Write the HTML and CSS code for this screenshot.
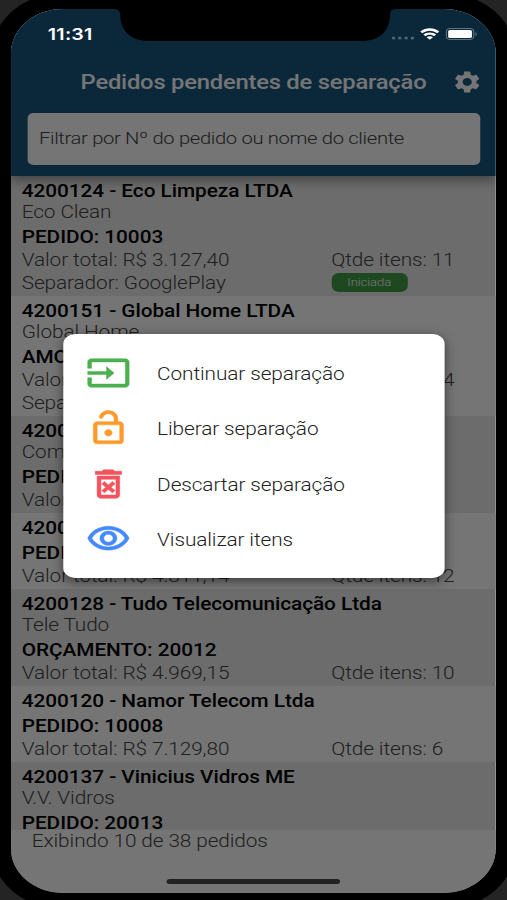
FILE: index.html
```html
<!DOCTYPE html>
<html lang="pt-BR">
<head>
    <meta charset="UTF-8">
    <meta name="viewport" content="width=device-width, initial-scale=1.0">
    <title>Pedidos pendentes de separação</title>
    <link rel="stylesheet" href="styles.css">
</head>
<body>
    <div class="screen">
        <header class="header">
            <div class="title-bar">
                <h1>Pedidos pendentes de separação</h1>
                <svg class="gear" viewBox="0 0 24 24"><path d="M19.14 12.94c.04-.3.06-.61.06-.94 0-.32-.02-.64-.07-.94l2.03-1.58c.18-.14.23-.41.12-.61l-1.92-3.32c-.12-.22-.37-.29-.59-.22l-2.39.96c-.5-.38-1.03-.7-1.62-.94l-.36-2.54c-.04-.24-.24-.41-.48-.41h-3.84c-.24 0-.43.17-.47.41l-.36 2.54c-.59.24-1.13.57-1.62.94l-2.39-.96c-.22-.08-.47 0-.59.22L2.74 8.87c-.12.21-.08.47.12.61l2.03 1.58c-.05.3-.09.63-.09.94s.02.64.07.94l-2.03 1.58c-.18.14-.23.41-.12.61l1.92 3.32c.12.22.37.29.59.22l2.39-.96c.5.38 1.03.7 1.62.94l.36 2.54c.05.24.24.41.48.41h3.84c.24 0 .44-.17.47-.41l.36-2.54c.59-.24 1.13-.56 1.62-.94l2.39.96c.22.08.47 0 .59-.22l1.92-3.32c.12-.22.07-.47-.12-.61l-2.01-1.58zM12 15.6c-1.98 0-3.6-1.62-3.6-3.6s1.62-3.6 3.6-3.6 3.6 1.62 3.6 3.6-1.62 3.6-3.6 3.6z"/></svg>
            </div>
            <div class="search">Filtrar por Nº do pedido ou nome do cliente</div>
        </header>

        <main class="list">
            <div class="order">
                <div class="client">4200124 - Eco Limpeza LTDA</div>
                <div class="name">Eco Clean</div>
                <div class="number">PEDIDO: 10003</div>
                <div class="values"><span>Valor total: R$ 3.127,40</span><span>Qtde itens: 11</span></div>
                <div class="picker"><span>Separador: GooglePlay</span><span class="badge">Iniciada</span></div>
            </div>
            <div class="order">
                <div class="client">4200151 - Global Home LTDA</div>
                <div class="name">Global Home</div>
                <div class="number">AMOSTRA: 30004</div>
                <div class="values"><span>Valor total: R$ 2.350,00</span><span>Qtde itens: 14</span></div>
                <div class="picker"><span>Separador: GooglePlay</span></div>
            </div>
            <div class="order">
                <div class="client">4200130 - Comercial Ltda</div>
                <div class="name">Comercial</div>
                <div class="number">PEDIDO: 10005</div>
                <div class="values"><span>Valor total: R$ 1.200,00</span><span>Qtde itens: 5</span></div>
            </div>
            <div class="order">
                <div class="client">4200126 - Casa Ltda</div>
                <div class="number">PEDIDO: 10006</div>
                <div class="values"><span>Valor total: R$ 4.811,14</span><span>Qtde itens: 12</span></div>
            </div>
            <div class="order">
                <div class="client">4200128 - Tudo Telecomunicação Ltda</div>
                <div class="name">Tele Tudo</div>
                <div class="number">ORÇAMENTO: 20012</div>
                <div class="values"><span>Valor total: R$ 4.969,15</span><span>Qtde itens: 10</span></div>
            </div>
            <div class="order">
                <div class="client">4200120 - Namor Telecom Ltda</div>
                <div class="number">PEDIDO: 10008</div>
                <div class="values"><span>Valor total: R$ 7.129,80</span><span>Qtde itens: 6</span></div>
            </div>
            <div class="order">
                <div class="client">4200137 - Vinicius Vidros ME</div>
                <div class="name">V.V. Vidros</div>
                <div class="number">PEDIDO: 20013</div>
            </div>
        </main>

        <footer class="footer">Exibindo 10 de 38 pedidos</footer>

        <div class="overlay">
            <div class="dialog">
                <div class="option">
                    <svg class="green" viewBox="0 0 24 24"><path d="M21 3.01H3c-1.100 0-2 .9-2 2V9h2V4.990h18v14.030H3V15H1v4.010c0 1.100.9 1.980 2 1.980h18c1.100 0 2-.88 2-1.980v-14c0-1.110-.9-2-2-2zM11 16l4-4-4-4v3H1v2h10v3z"/></svg>
                    <span>Continuar separação</span>
                </div>
                <div class="option">
                    <svg class="orange" viewBox="0 0 24 24"><path d="M12 17c1.100 0 2-.9 2-2s-.9-2-2-2-2 .9-2 2 .9 2 2 2zm6-9h-1V6c0-2.760-2.240-5-5-5-2.280 0-4.270 1.540-4.840 3.750-.14.54.18 1.080.72 1.220.53.14 1.080-.18 1.220-.72C9.440 3.930 10.630 3 12 3c1.650 0 3 1.350 3 3v2H6c-1.100 0-2 .9-2 2v10c0 1.100.9 2 2 2h12c1.100 0 2-.9 2-2V10c0-1.100-.9-2-2-2zm0 12H6V10h12v10z"/></svg>
                    <span>Liberar separação</span>
                </div>
                <div class="option">
                    <svg class="red" viewBox="0 0 24 24"><path d="M14.120 10.470L12 12.590l-2.130-2.120-1.410 1.410L10.590 14l-2.120 2.120 1.410 1.410L12 15.410l2.120 2.120 1.410-1.410L13.410 14l2.120-2.120zM15.500 4l-1-1h-5l-1 1H5v2h14V4zM6 19c0 1.100.9 2 2 2h8c1.100 0 2-.9 2-2V7H6v12zM8 9h8v10H8V9z"/></svg>
                    <span>Descartar separação</span>
                </div>
                <div class="option">
                    <svg class="blue" viewBox="0 0 24 24"><path d="M12 6c3.790 0 7.170 2.130 8.820 5.500C19.170 14.870 15.790 17 12 17s-7.170-2.130-8.820-5.500C4.830 8.130 8.210 6 12 6m0-2C7 4 2.730 7.110 1 11.500 2.730 15.890 7 19 12 19s9.270-3.110 11-7.500C21.270 7.110 17 4 12 4zm0 5c1.380 0 2.500 1.120 2.500 2.500S13.380 14 12 14s-2.500-1.120-2.500-2.500S10.620 9 12 9m0-2c-2.480 0-4.500 2.020-4.500 4.500S9.520 16 12 16s4.500-2.020 4.500-4.500S14.480 7 12 7z"/></svg>
                    <span>Visualizar itens</span>
                </div>
            </div>
        </div>

        <svg class="notch" viewBox="0 0 235 32"><path d="M0 0 H235 Q231 1 231 6 C231 22 222 32 207 32 H28 C13 32 4 22 4 6 Q4 1 0 0 Z"/></svg>

        <div class="status">
            <span class="time">11:31</span>
            <svg class="signal" viewBox="0 0 20 4"><circle cx="2" cy="2" r="1.500"/><circle cx="7.300" cy="2" r="1.500"/><circle cx="12.600" cy="2" r="1.500"/><circle cx="17.900" cy="2" r="1.500"/></svg>
            <svg class="wifi" viewBox="0 0 16 12"><path d="M8 2.400c2.200 0 4.200.9 5.700 2.300.1.100.3.100.4 0l1.200-1.200c.1-.1.100-.3 0-.5C13.300 1.100 10.800 0 8 0S2.700 1.100.7 3c-.1.200-.1.400 0 .5l1.200 1.200c.1.100.3.100.4 0C3.800 3.300 5.800 2.400 8 2.400zm0 3.900c1.200 0 2.300.5 3.200 1.200.1.100.3.100.4 0l1.200-1.200c.2-.1.200-.3 0-.5C11.500 4.700 9.800 4 8 4s-3.500.7-4.800 1.800c-.2.200-.2.400 0 .5l1.200 1.200c.1.100.3.100.4 0C5.700 6.800 6.800 6.300 8 6.300zm2.300 2.500c.2-.1.100-.3 0-.5C9.700 7.900 8.900 7.600 8 7.600s-1.700.3-2.300.7c-.1.200-.2.400 0 .5l2.100 2c.1.100.3.100.4 0z"/></svg>
            <svg class="battery" viewBox="0 0 27 12"><rect class="case" x="0.500" y="0.500" width="23" height="11" rx="3"/><rect x="2" y="2" width="20" height="8" rx="1.500"/><path class="tip" d="M25 4v4c1.500-.6 1.500-3.400 0-4z"/></svg>
        </div>
        <div class="home"></div>
    </div>
</body>
</html>
```
FILE: styles.css
```css
* {
    box-sizing: border-box;
}
body {
    margin: 0;
    height: 100vh;
    overflow: hidden;
    background: #242424;
    font-family: Roboto, "Liberation Sans", sans-serif;
}
.screen {
    position: relative;
    display: flex;
    flex-direction: column;
    width: 408.2px;
    height: 884px;
    margin: 9px 0 0 11px;
    overflow: hidden;
    border-radius: 44px;
    background: #fff;
    box-shadow: 0 0 0 16px #000;
    transform: scaleX(1.188);
    transform-origin: left top;
    font-size: 17.500px;
    font-weight: 300;
    letter-spacing: -0.080px;
    color: #444;
}
.header {
    position: relative;
    z-index: 1;
    flex: none;
    height: 167px;
    padding: 56px 13.500px 0;
    background: #17587f;
    box-shadow: 0 4px 10px rgba(0, 0, 0, 0.4);
}
.title-bar {
    display: flex;
    align-items: center;
    justify-content: flex-end;
    height: 34px;
}
h1 {
    margin: 0 21.500px 0 0;
    font-size: 20px;
    font-weight: 500;
    letter-spacing: -0.180px;
    white-space: nowrap;
    color: #fff;
}
.gear {
    width: 26px;
    height: 26px;
    margin-right: -2.500px;
    fill: #fff;
}
.search {
    height: 52px;
    margin-top: 14px;
    padding-left: 10px;
    border-radius: 5px;
    background: #fff;
    font-size: 17px;
    line-height: 51px;
    letter-spacing: -0.280px;
    white-space: nowrap;
}
.list {
    flex: none;
    height: 654px;
    overflow: hidden;
}
.order {
    padding: 4px 9px 3px;
    white-space: nowrap;
}
.order:nth-child(odd) {
    background: #ebebeb;
}
.client,
.number {
    font-weight: 500;
    letter-spacing: -0.040px;
    color: #000;
}
.client,
.name {
    height: 21px;
    line-height: 23px;
}
.number {
    height: 28px;
    line-height: 30px;
}
.values,
.picker {
    display: grid;
    grid-template-columns: 260.500px 1fr;
    line-height: 20px;
}
.picker {
    height: 23px;
    line-height: 26px;
}
.badge {
    width: 64px;
    height: 19px;
    margin-top: 3px;
    border-radius: 6px;
    background: #43a047;
    color: #fff;
    font-size: 11px;
    line-height: 19px;
    text-align: center;
}
.footer {
    padding-left: 17.500px;
    line-height: 22.500px;
}
.overlay {
    position: absolute;
    inset: 0;
    z-index: 2;
    background: rgba(0, 0, 0, 0.54);
}
.dialog {
    width: 321px;
    margin: 325px 0 0 43.500px;
    padding: 11px 0;
    border-radius: 10px;
    background: #fff;
    box-shadow: 0 3px 10px rgba(0, 0, 0, 0.5);
    color: #222;
}
.option {
    display: flex;
    align-items: center;
    height: 55.500px;
    padding-left: 19px;
}
.option svg {
    width: 38px;
    height: 38px;
    margin-right: 22.500px;
    stroke-width: 0.300px;
}
.option span {
    padding-top: 1.500px;
}
.green {
    fill: #4caf50;
    stroke: #4caf50;
}
.orange {
    fill: #ff9a28;
    stroke: #ff9a28;
}
.red {
    fill: #f4525c;
    stroke: #f4525c;
}
.blue {
    fill: #448aff;
    stroke: #448aff;
}
.notch {
    position: absolute;
    top: 0;
    left: 87.500px;
    z-index: 3;
    width: 235px;
    height: 32px;
}
.status {
    position: absolute;
    top: 14px;
    left: 0;
    right: 0;
    z-index: 3;
    display: flex;
    align-items: center;
    height: 22px;
    padding: 0 15px 0 31px;
    fill: #fff;
    color: #fff;
}
.time {
    flex: 1;
    font-family: Inter, sans-serif;
    font-size: 16.500px;
    font-weight: 600;
    letter-spacing: 0.200px;
}
.signal {
    width: 20px;
    height: 4px;
    margin: 8px 4px 0 0;
    fill: #4c6474;
}
.wifi {
    width: 17px;
    height: 13px;
    margin-right: 5px;
}
.battery {
    width: 27px;
    height: 12px;
}
.case {
    fill: none;
    stroke: #5b7382;
}
.tip {
    fill: #5b7382;
}
.home {
    position: absolute;
    bottom: 9px;
    left: 131px;
    z-index: 3;
    width: 146px;
    height: 5px;
    border-radius: 3px;
    background: #222;
}
```
